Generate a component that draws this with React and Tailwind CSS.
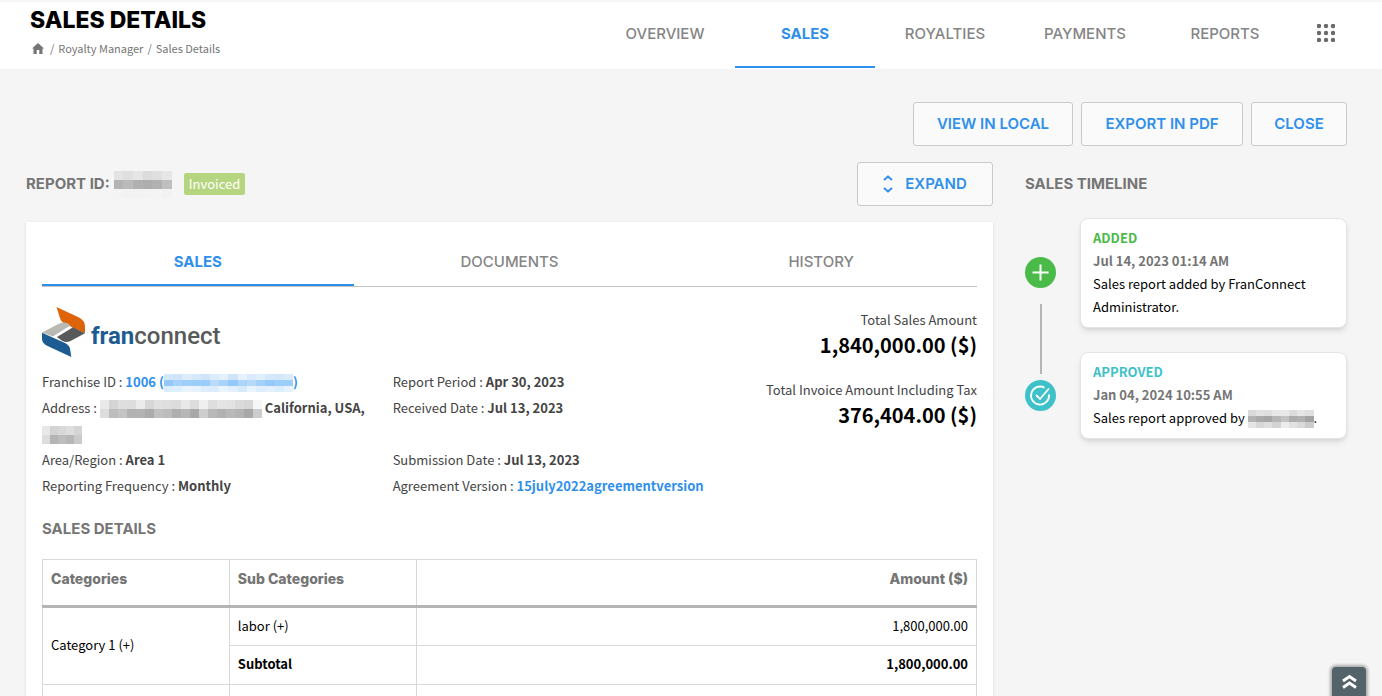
import React, { useState } from 'react';

const NAV = ['OVERVIEW', 'SALES', 'ROYALTIES', 'PAYMENTS', 'REPORTS'];
const TABS = ['SALES', 'DOCUMENTS', 'HISTORY'];
const HEADING = "font-['Inter'] font-bold text-[#757575]";
const BUTTON = "h-11 rounded-[3px] border border-[#cacaca] bg-[#fafafa] font-['Inter'] text-[15px] font-semibold text-[#2f90ec] hover:bg-white";

// Hidden values are drawn as rows of flat cells
const MASKS = {
  reportId: {
    size: 'w-[58px] h-[27px]',
    rows: [
      ['#e3e3e3', '#dfdfdf', '#e5e5e5', '#dcdcdc', '#dfdfdf', '#e6e6e6'],
      ['#b3b3b3', '#bababa', '#b0b0b0', '#adadad', '#b1b1b1', '#bfbfbf'],
      ['#f4f4f4', '#f2f2f2', '#f2f2f2', '#f3f3f3', '#f4f4f4', '#f2f2f2'],
    ],
  },
  owner: {
    size: 'w-[129px] h-[18px]',
    rows: [
      ['#d3e7fb', '#cfe4fa', '#dcecfb', '#d6e9fb', '#cde4fa', '#dcecfb', '#e4f1fd', '#cfe5fa', '#e6f2fd', '#d8eafb', '#e0effc', '#d4e8fb', '#d3e7fb', '#d9ebfb'],
      ['#94c8f8', '#a6d1fa', '#a0cefa', '#9ccdf9', '#9ccdf9', '#b8dbfb', '#a8d3fa', '#94c8f8', '#add5fa', '#b4d9fb', '#a4d0fa', '#96c9f8', '#9dcdf9', '#9dcdf9'],
      ['#dceefd', '#e0effd', '#e9f4fd', '#e6f2fd', '#dceefd', '#dceefd', '#e9f4fd', '#e3f0fd', '#d6eafc', '#eaf4fd', '#e0effd', '#e3f0fd', '#dceefd', '#e6f2fd'],
    ],
  },
  address: {
    size: 'w-[162px] h-[18px]',
    rows: [
      ['#e9e9e9', '#d4d4d4', '#dedede', '#dddddd', '#ebebeb', '#d6d6d6', '#e0e0e0', '#dedede', '#dbdbdb', '#e8e8e8', '#dddddd', '#efefef', '#dedede', '#e4e4e4', '#e2e2e2', '#dadada', '#d6d6d6', '#f6f6f6'],
      ['#dddddd', '#bdbdbd', '#c4c4c4', '#b3b3b3', '#b3b3b3', '#acacac', '#c1c1c1', '#bcbcbc', '#afafaf', '#b7b7b7', '#a8a8a8', '#cdcdcd', '#b8b8b8', '#b1b1b1', '#b9b9b9', '#b4b4b4', '#a8a8a8', '#cccccc'],
    ],
  },
  zip: {
    size: 'w-10 h-[18px]',
    rows: [
      ['#e8e8e8', '#d3d3d3', '#d8d8d8', '#dedede', '#d5d5d5'],
      ['#dddddd', '#b5b5b5', '#bdbdbd', '#b7b7b7', '#cacaca'],
    ],
  },
  approver: {
    size: 'w-[66px] h-[18px]',
    rows: [
      ['#d9d9d9', '#e2e2e2', '#dfdfdf', '#e7e7e7', '#e9e9e9', '#dcdcdc', '#e6e6e6', '#e0e0e0'],
      ['#b3b3b3', '#aaaaaa', '#a6a6a6', '#b6b6b6', '#c3c3c3', '#adadad', '#b1b1b1', '#a3a3a3'],
      ['#e5e5e5', '#d7d7d7', '#dedede', '#d3d3d3', '#ececec', '#e1e1e1', '#d9d9d9', '#cccccc'],
    ],
  },
};

function Mask({ name }) {
  const { size, rows } = MASKS[name];
  return (
    <span className={`inline-flex flex-col align-middle ${size}`} aria-hidden="true">
      {rows.map((row, i) => (
        <span key={i} className="flex flex-1">
          {row.map((color, j) => (
            <span key={j} className="flex-1" style={{ backgroundColor: color }} />
          ))}
        </span>
      ))}
    </span>
  );
}

function Field({ label, children }) {
  return (
    <div>
      <dt className="inline">{label} : </dt>
      <dd className="inline font-bold">{children}</dd>
    </div>
  );
}

function Logo() {
  return (
    <div className="flex h-[50px] items-center">
      <svg width="44" height="50" viewBox="0 0 44 50" aria-hidden="true">
        <path d="M14.5 0 L37 10.5 Q43 13.5 43 19 V26.3 L22 16.5 Q19 15 18 11.3 Z" fill="#dd6409" />
        <path d="M0 25.5 L17.3 16.5 Q24 13.5 28.5 18.5 L10.7 29.5 Z" fill="#b9bab4" />
        <path d="M15 30 L31 20.3 L43 26.3 L28 34.3 Q24 36 20 33.7 Z" fill="#58595b" />
        <path d="M0 25.7 L23 36 Q27 38 28 41.5 L29.3 50 L5 38.7 Q0 36 0 32 Z" fill="#1d5c93" />
      </svg>
      <span className="mt-2 ml-[5px] font-['Roboto'] text-2xl font-medium text-[#58595b]">
        <span className="font-bold text-[#1d5c93]">fran</span>connect
      </span>
    </div>
  );
}

function TimelineCard({ status, color, date, children }) {
  return (
    <li className="rounded-lg border border-[#e4e4e4] bg-white px-3 pt-[7px] pb-[9px] text-[13px] leading-[23px] text-black shadow-md shadow-black/10">
      <div className={`font-bold ${color}`}>{status}</div>
      <div className="font-bold text-[#757575]">{date}</div>
      <p>{children}</p>
    </li>
  );
}

export default function App() {
  const [page, setPage] = useState('SALES');
  const [tab, setTab] = useState('SALES');

  return (
    <div className="min-h-screen bg-[#f5f5f5] font-['Noto_Sans_CJK_SC',sans-serif] text-[13px] text-[#444]">
      <header className="flex h-[69px] justify-between border-t-2 border-[#f5f5f5] bg-white pr-[47px] pl-[30px]">
        <div>
          <h1 className="mt-1 font-['Inter'] text-[23px] leading-7 font-extrabold text-black">SALES DETAILS</h1>
          <nav aria-label="Breadcrumb" className="mt-1 flex items-center gap-1 text-[11px] leading-5 text-[#757575]">
            <a href="#home" aria-label="Home" className="mx-0.5">
              <svg width="12" height="11" viewBox="0 0 12 11" fill="#757575">
                <path d="M6 0 L12 5.5 H10.5 V11 H7.3 V7 H4.7 V11 H1.5 V5.5 H0 Z" />
              </svg>
            </a>
            <span>/</span>
            <a href="#royalty">Royalty Manager</a>
            <span>/</span>
            <a href="#sales">Sales Details</a>
          </nav>
        </div>
        <div className="flex items-center gap-[22px]">
          <nav className="flex h-full">
            {NAV.map((item) => (
              <a
                key={item}
                href={`#${item.toLowerCase()}`}
                onClick={() => setPage(item)}
                className={`mb-px flex w-[140px] items-center justify-center border-b-2 font-['Inter'] text-[15px] ${
                  page === item ? 'border-[#2f90ec] font-bold text-[#2f90ec]' : 'border-transparent font-medium text-[#858585]'
                }`}
              >
                {item}
              </a>
            ))}
          </nav>
          <button type="button" aria-label="Apps" className="pb-1.5">
            <svg width="18" height="18" viewBox="0 0 18 18" fill="#6b6b6b">
              {[2, 9, 16].map((y) => [2, 9, 16].map((x) => <circle key={`${x}-${y}`} cx={x} cy={y} r="2.2" />))}
            </svg>
          </button>
        </div>
      </header>

      <main className="pt-[33px] pr-[35px] pl-[26px]">
        <div className="flex justify-end gap-2">
          <button type="button" className={`${BUTTON} w-[160px]`}>VIEW IN LOCAL</button>
          <button type="button" className={`${BUTTON} w-[162px]`}>EXPORT IN PDF</button>
          <button type="button" className={`${BUTTON} w-24`}>CLOSE</button>
        </div>

        <div className="mt-4 flex gap-8">
          <section className="min-w-0 flex-1">
            <div className="flex h-11 items-center">
              <h2 className={`${HEADING} mr-1 text-[15px]`}>REPORT ID:</h2>
              <Mask name="reportId" />
              <span className="ml-3 rounded-xs bg-[#b6d580] px-[5px] text-[13px] leading-[22px] text-white">Invoiced</span>
              <button type="button" className={`${BUTTON} ml-auto flex w-[136px] items-center justify-center gap-3`}>
                <svg width="10" height="18" viewBox="0 0 10 18" fill="none" stroke="currentColor" strokeWidth="2">
                  <path d="M1 5 L5 1.5 L9 5 M1 13 L5 16.5 L9 13" />
                </svg>
                EXPAND
              </button>
            </div>

            <div className="mt-4 bg-white p-4 shadow-sm">
              <div role="tablist" className="flex h-[49px] border-b border-[#c4c4c4]">
                {TABS.map((item) => (
                  <button
                    key={item}
                    type="button"
                    role="tab"
                    aria-selected={tab === item}
                    onClick={() => setTab(item)}
                    className={`flex-1 border-b-2 pt-0.5 font-['Inter'] text-[15px] ${
                      tab === item ? 'border-[#2f90ec] font-bold text-[#2f90ec]' : 'border-transparent font-medium text-[#858585]'
                    }`}
                  >
                    {item}
                  </button>
                ))}
              </div>

              <div className="mt-5 flex">
                <div className="w-3/4">
                  <Logo />
                  <dl className="mt-3 grid grid-cols-2 leading-[26px]">
                    <Field label="Franchise ID">
                      <a href="#franchise" className="text-[#2f90ec]">1006 (<Mask name="owner" />)</a>
                    </Field>
                    <Field label="Report Period">Apr 30, 2023</Field>
                    <Field label="Address"><Mask name="address" /> California, USA, <Mask name="zip" /></Field>
                    <Field label="Received Date">Jul 13, 2023</Field>
                    <Field label="Area/Region">Area 1</Field>
                    <Field label="Submission Date">Jul 13, 2023</Field>
                    <Field label="Reporting Frequency">Monthly</Field>
                    <Field label="Agreement Version">
                      <a href="#agreement" className="text-[#2f90ec]">15july2022agreementversion</a>
                    </Field>
                  </dl>
                </div>
                <dl className="w-1/4 text-right whitespace-nowrap">
                  <dt className="flex justify-end leading-[26px]">Total Sales Amount</dt>
                  <dd className="mb-5 text-xl leading-6 font-bold text-black">1,840,000.00 ($)</dd>
                  <dt className="flex justify-end leading-[26px]">Total Invoice Amount Including Tax</dt>
                  <dd className="text-xl leading-6 font-bold text-black">376,404.00 ($)</dd>
                </dl>
              </div>

              <h3 className={`${HEADING} mt-5 text-[15px] leading-5`}>SALES DETAILS</h3>

              <table className="mt-5 w-full table-fixed border-collapse text-[13px] text-black">
                <thead>
                  <tr className="h-[47px] text-left align-top font-['Inter'] text-sm text-[#757575] [&>th]:border [&>th]:border-[#d9d9d9] [&>th]:border-b-3 [&>th]:border-b-[#b5b5b5] [&>th]:px-2 [&>th]:pt-[9px] [&>th]:font-extrabold">
                    <th className="w-1/5">Categories</th>
                    <th className="w-1/5">Sub Categories</th>
                    <th className="text-right">Amount ($)</th>
                  </tr>
                </thead>
                <tbody className="[&_td]:h-[39px] [&_td]:border [&_td]:border-[#d9d9d9] [&_td]:px-2 [&_td]:pb-0.5">
                  <tr>
                    <td rowSpan={2}>Category 1 (+)</td>
                    <td>labor (+)</td>
                    <td className="text-right">1,800,000.00</td>
                  </tr>
                  <tr className="font-bold">
                    <td>Subtotal</td>
                    <td className="text-right">1,800,000.00</td>
                  </tr>
                  <tr>
                    <td></td>
                    <td></td>
                    <td></td>
                  </tr>
                </tbody>
              </table>
            </div>
          </section>

          <aside className="w-[322px]">
            <h2 className={`${HEADING} text-[15px] leading-[44px]`}>SALES TIMELINE</h2>
            <div className="mt-3 flex gap-6">
              <div className="flex w-[31px] flex-col items-center pt-[39px]">
                <svg width="31" height="31" viewBox="0 0 31 31" aria-hidden="true">
                  <circle cx="15.5" cy="15.5" r="15.5" fill="#4aba48" />
                  <path d="M15.5 7.5 V23.5 M7.5 15.5 H23.5" stroke="#fff" strokeWidth="2" />
                </svg>
                <div className="mt-4 mb-1.5 h-[70px] w-0.5 bg-[#b5b5b5]" />
                <svg width="31" height="31" viewBox="0 0 31 31" fill="none" stroke="#fff" strokeWidth="1.8" aria-hidden="true">
                  <circle cx="15.5" cy="15.5" r="15.5" fill="#3fc1ca" stroke="none" />
                  <path d="M19.5 7.7 A9 9 0 1 0 24 14.5 M11 15 L15 19 L24 8.5" />
                </svg>
              </div>
              <ul className="flex flex-1 flex-col gap-6">
                <TimelineCard status="ADDED" color="text-[#4aba48]" date="Jul 14, 2023 01:14 AM">
                  Sales report added by FranConnect Administrator.
                </TimelineCard>
                <TimelineCard status="APPROVED" color="text-[#3fc1ca]" date="Jan 04, 2024 10:55 AM">
                  Sales report approved by <Mask name="approver" />.
                </TimelineCard>
              </ul>
            </div>
          </aside>
        </div>
      </main>

      <button
        type="button"
        aria-label="Back to top"
        onClick={() => window.scrollTo(0, 0)}
        className="fixed right-4 bottom-0 flex h-[29px] w-[34px] items-center justify-center rounded-t bg-[#546269] shadow-[0_0_3px_2px_rgba(0,0,0,0.3)]"
      >
        <svg width="15" height="15" viewBox="0 0 15 15" fill="none" stroke="#fff" strokeWidth="3">
          <path d="M1 7 L7.5 2.5 L14 7 M1 13.5 L7.5 9 L14 13.5" />
        </svg>
      </button>
    </div>
  );
}
